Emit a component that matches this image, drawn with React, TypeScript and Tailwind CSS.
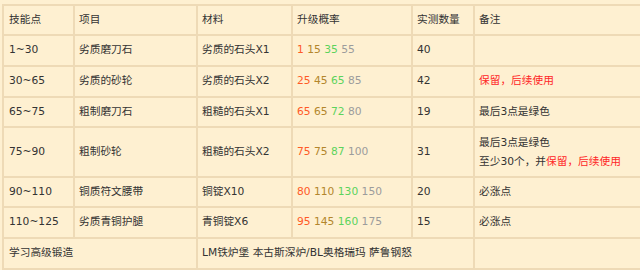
import React from "react";

type Rate = [string, string, string, string];

const rows: {
  level: string;
  item: string;
  material: string;
  rate: Rate;
  count: string;
  note: React.ReactNode;
  tall?: boolean;
}[] = [
  { level: "1~30", item: "劣质磨刀石", material: "劣质的石头X1", rate: ["1", "15", "35", "55"], count: "40", note: null },
  {
    level: "30~65",
    item: "劣质的砂轮",
    material: "劣质的石头X2",
    rate: ["25", "45", "65", "85"],
    count: "42",
    note: <span className="text-[#ff2626]">保留，后续使用</span>,
  },
  { level: "65~75", item: "粗制磨刀石", material: "粗糙的石头X1", rate: ["65", "65", "72", "80"], count: "19", note: "最后3点是绿色" },
  {
    level: "75~90",
    item: "粗制砂轮",
    material: "粗糙的石头X2",
    rate: ["75", "75", "87", "100"],
    count: "31",
    tall: true,
    note: (
      <div className="flex flex-col gap-[0px] leading-[19px]">
        <span>最后3点是绿色</span>
        <span>
          至少30个，并<span className="text-[#ff2626]">保留，后续使用</span>
        </span>
      </div>
    ),
  },
  { level: "90~110", item: "铜质符文腰带", material: "铜锭X10", rate: ["80", "110", "130", "150"], count: "20", note: "必涨点" },
  { level: "110~125", item: "劣质青铜护腿", material: "青铜锭X6", rate: ["95", "145", "160", "175"], count: "15", note: "必涨点" },
];

const rateColors = ["text-[#ff5a26]", "text-[#b3862c]", "text-[#5cd35c]", "text-[#9c9c9c]"];

function Cell({ children, className = "" }: { children?: React.ReactNode; className?: string }) {
  return <div className={"flex items-center bg-[#fef0d1] pl-[4px] " + className}>{children}</div>;
}

export default function App() {
  return (
    <div
      className="h-[270px] w-[640px] overflow-hidden bg-[#fef0d1] pl-[2px] pt-[4px] text-[10.7px] text-[#333333]"
      style={{ fontFamily: '"DejaVu Sans", "Noto Sans CJK SC", sans-serif' }}
    >
      <div className="grid w-max grid-cols-[69px_121px_93px_118px_60px_200px] grid-rows-[28px_29px_29px_28px_48px_28px_29px_29px] gap-[2px] bg-[#eedab6] p-[2px]">
        <Cell className="pl-[5px]">技能点</Cell>
        <Cell>项目</Cell>
        <Cell>材料</Cell>
        <Cell>升级概率</Cell>
        <Cell>实测数量</Cell>
        <Cell>备注</Cell>

        {rows.map((r) => (
          <React.Fragment key={r.level}>
            <Cell className="pl-[5px]">{r.level}</Cell>
            <Cell>{r.item}</Cell>
            <Cell>{r.material}</Cell>
            <Cell className="gap-[3.4px]">
              {r.rate.map((v, i) => (
                <span key={i} className={rateColors[i]}>
                  {v}
                </span>
              ))}
            </Cell>
            <Cell>{r.count}</Cell>
            <Cell>{r.note}</Cell>
          </React.Fragment>
        ))}

        <Cell className="col-span-2 pl-[5px]">学习高级锻造</Cell>
        <Cell className="col-span-3">LM铁炉堡 本古斯深炉/BL奥格瑞玛 萨鲁钢怒</Cell>
        <Cell />
      </div>
    </div>
  );
}
